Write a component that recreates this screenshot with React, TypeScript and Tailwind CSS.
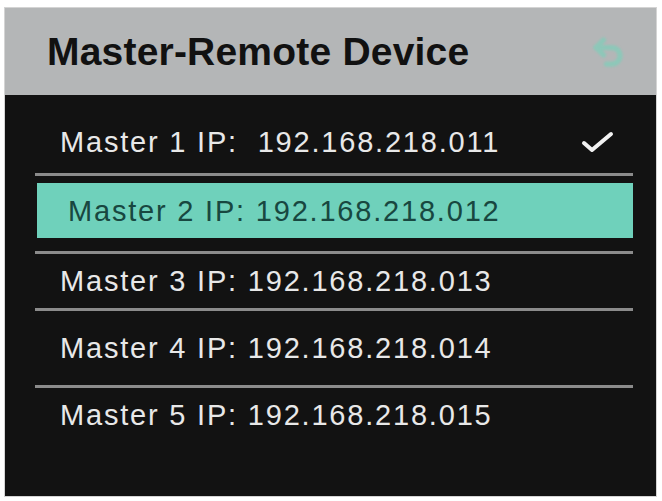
import React from 'react';
import { Undo2 } from 'lucide-react';

const masters = [
  { id: 1, ip: '192.168.218.011' },
  { id: 2, ip: '192.168.218.012' },
  { id: 3, ip: '192.168.218.013' },
  { id: 4, ip: '192.168.218.014' },
  { id: 5, ip: '192.168.218.015' },
];

const Divider = () => <div className="h-[3px] bg-[#8b8b8b]" />;

const RowText = ({ children, className = '' }: { children: React.ReactNode; className?: string }) => (
  <span className={`text-[29px] leading-[34px] tracking-[1.8px] whitespace-pre ${className}`}>{children}</span>
);

const App = () => {
  return (
    <div className="w-[662px] h-[501px] bg-white pt-[7px] pl-[4px] font-['Liberation_Sans',Arial,sans-serif]">
      <div className="w-[653px] h-[490px] border border-[#d4d4d4] flex flex-col bg-[#121212]">
        {/* header */}
        <div className="h-[87px] bg-[#b4b6b7] flex items-center pl-[42px] pr-[30px]">
          <h1 className="text-[39px] font-bold text-[#111111] leading-none tracking-[0.2px]">Master-Remote Device</h1>
          <Undo2 className="ml-auto text-[#74d3ba] opacity-60 blur-[1px]" size={36} strokeWidth={3.5} />
        </div>

        {/* list */}
        <div className="flex-1 flex flex-col pl-[30px] pr-[23px]">
          <div className="h-[78px] pt-[16px] flex items-center pl-[25px] pr-[18px]">
            <RowText className="text-[#e8e8e8]">{`Master ${masters[0].id} IP:  ${masters[0].ip}`}</RowText>
            <svg className="ml-auto" width="34" height="24" viewBox="0 0 34 24" fill="none">
              <path d="M3 13 L11 20 L30 4" stroke="#f2f2f2" strokeWidth="4" strokeLinecap="round" strokeLinejoin="round" />
            </svg>
          </div>
          <Divider />

          <div className="pt-[7px] pb-[13px]">
            <div className="ml-[2px] h-[55px] bg-[#6fd1bb] flex items-center pl-[31px]">
              <RowText className="text-[#184740]">{`Master ${masters[1].id} IP: ${masters[1].ip}`}</RowText>
            </div>
          </div>
          <Divider />

          <div className="h-[54px] flex items-center pl-[25px]">
            <RowText className="text-[#e8e8e8]">{`Master ${masters[2].id} IP: ${masters[2].ip}`}</RowText>
          </div>
          <Divider />

          <div className="h-[74px] flex items-center pl-[25px]">
            <RowText className="text-[#e8e8e8]">{`Master ${masters[3].id} IP: ${masters[3].ip}`}</RowText>
          </div>
          <Divider />

          <div className="h-[54px] flex items-center pl-[25px]">
            <RowText className="text-[#e8e8e8]">{`Master ${masters[4].id} IP: ${masters[4].ip}`}</RowText>
          </div>
        </div>
      </div>
    </div>
  );
};

export default App;
